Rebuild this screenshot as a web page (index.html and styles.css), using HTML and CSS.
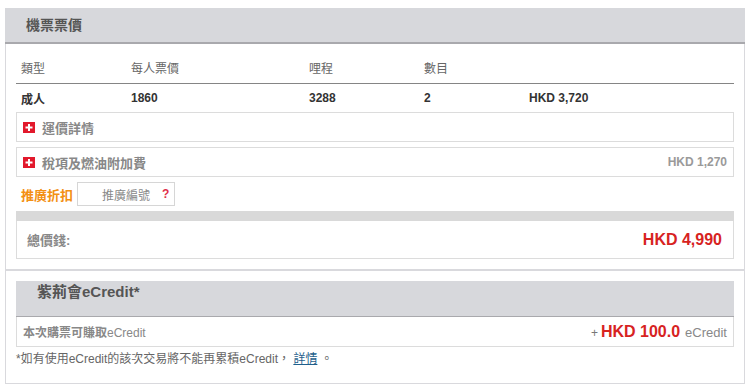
FILE: index.html
```html
<!DOCTYPE html>
<html lang="zh-Hant">
<head>
    <meta charset="UTF-8">
    <title>機票票價</title>
    <link rel="stylesheet" href="styles.css">
</head>
<body>
    <div class="panel">
        <div class="panel-title">機票票價</div>

        <div class="section">
            <div class="fare-row fare-head">
                <span>類型</span>
                <span>每人票價</span>
                <span>哩程</span>
                <span>數目</span>
                <span></span>
            </div>
            <div class="fare-row fare-data">
                <span>成人</span>
                <span>1860</span>
                <span>3288</span>
                <span>2</span>
                <span>HKD 3,720</span>
            </div>

            <div class="toggle-box">
                <span class="plus-icon">
                    <svg width="12" height="11" viewBox="0 0 12 11">
                        <rect width="12" height="11" fill="#e2192c"/>
                        <path d="M6 2v7M2.5 5.5h7" stroke="#fff" stroke-width="2"/>
                    </svg>
                </span>
                <span class="toggle-label">運價詳情</span>
            </div>
            <div class="toggle-box">
                <span class="plus-icon">
                    <svg width="12" height="11" viewBox="0 0 12 11">
                        <rect width="12" height="11" fill="#e2192c"/>
                        <path d="M6 2v7M2.5 5.5h7" stroke="#fff" stroke-width="2"/>
                    </svg>
                </span>
                <span class="toggle-label">稅項及燃油附加費</span>
                <span class="toggle-amount">HKD 1,270</span>
            </div>

            <div class="promo-row">
                <span class="promo-label">推廣折扣</span>
                <div class="promo-input">
                    <span class="promo-placeholder">推廣編號</span>
                    <span class="promo-help">?</span>
                </div>
            </div>

            <div class="total-bar"></div>
            <div class="total-box">
                <span class="total-label">總價錢:</span>
                <span class="total-amount">HKD 4,990</span>
            </div>
        </div>

        <div class="section section-credit">
            <div class="credit-title">紫荊會eCredit*</div>
            <div class="credit-box">
                <span class="credit-label"><b>本次購票可賺取</b>eCredit</span>
                <span class="credit-earn">
                    <span class="credit-plus">+</span>
                    <span class="credit-amount">HKD 100.0</span>
                    <span class="credit-unit">eCredit</span>
                </span>
            </div>
            <p class="credit-note">*如有使用eCredit的該次交易將不能再累積eCredit， <a href="#">詳情</a> 。</p>
        </div>
    </div>
</body>
</html>
```

FILE: styles.css
```css
body {
    margin: 0;
    padding: 8px 0 0 5px;
    font-family: "Liberation Sans", Arial, "Noto Sans CJK TC", sans-serif;
    font-size: 12px;
    color: #333;
    background-color: white;
}
.panel {
    width: 738px;
    border: 1px solid #d9d9dd;
    border-top: none;
}
.panel-title {
    height: 34px;
    line-height: 34px;
    margin: 0 -1px;
    padding-left: 21px;
    background-color: #d7d8dc;
    border-bottom: 2px solid #a9a9ad;
    font-size: 14px;
    font-weight: bold;
    color: #555;
}
.section {
    padding: 14px 10px 10px;
}
.fare-row {
    display: grid;
    grid-template-columns: 110px 178px 115px 105px 1fr;
    align-items: center;
    padding-left: 5px;
    overflow: hidden;
}
.fare-head {
    align-items: start;
    height: 25px;
    line-height: 22px;
    border-bottom: 1px solid #858585;
    color: #666;
}
.fare-data {
    height: 28px;
    font-weight: bold;
    color: #333;
}
.toggle-box {
    display: flex;
    align-items: center;
    height: 28px;
    padding: 0 6px;
    margin-bottom: 5px;
    border: 1px solid #dcdcdc;
    overflow: hidden;
}
.plus-icon {
    display: flex;
    margin-right: 7px;
}
.toggle-label {
    font-size: 13px;
    font-weight: bold;
    color: #888;
}
.toggle-amount {
    margin-left: auto;
    font-weight: bold;
    color: #9a9a9a;
}
.promo-row {
    display: flex;
    align-items: center;
    gap: 4px;
    height: 24px;
    padding-left: 5px;
}
.promo-label {
    font-size: 13px;
    font-weight: bold;
    color: #f39013;
}
.promo-input {
    display: flex;
    align-items: center;
    width: 96px;
    height: 22px;
    border: 1px solid #d6d6d6;
}
.promo-placeholder {
    margin-left: 24px;
    color: #888;
}
.promo-help {
    margin-left: 12px;
    font-weight: bold;
    color: #e0304a;
}
.total-bar {
    height: 10px;
    margin-top: 5px;
    background-color: #d9d9d9;
}
.total-box {
    display: flex;
    align-items: center;
    justify-content: space-between;
    height: 37px;
    padding: 0 11px 0 10px;
    border: 1px solid #dcdcdc;
    border-top: none;
}
.total-label {
    font-size: 13px;
    font-weight: bold;
    color: #888;
}
.total-amount {
    font-size: 16px;
    font-weight: bold;
    color: #d7231f;
}
.section-credit {
    padding: 10px 10px 14px;
    border-top: 2px solid #d9d9dd;
}
.credit-title {
    height: 35px;
    line-height: 22px;
    padding-left: 21px;
    background-color: #d7d8dc;
    border-bottom: 1px solid #a9a9ad;
    font-size: 15px;
    font-weight: bold;
    color: #555;
    overflow: hidden;
}
.credit-box {
    display: flex;
    align-items: center;
    justify-content: space-between;
    height: 29px;
    padding: 0 6px;
    border: 1px solid #dcdcdc;
    border-top: none;
    overflow: hidden;
}
.credit-label {
    color: #888;
}
.credit-earn {
    display: flex;
    align-items: baseline;
    gap: 3px;
}
.credit-plus {
    font-size: 12px;
    color: #777;
}
.credit-amount {
    font-size: 16px;
    font-weight: bold;
    color: #d7231f;
}
.credit-unit {
    margin-left: 2px;
    font-size: 13px;
    color: #888;
}
.credit-note {
    height: 20px;
    margin: 2px 0 0;
    line-height: 20px;
    color: #666;
}
.credit-note a {
    color: #1f5f8c;
}
```
